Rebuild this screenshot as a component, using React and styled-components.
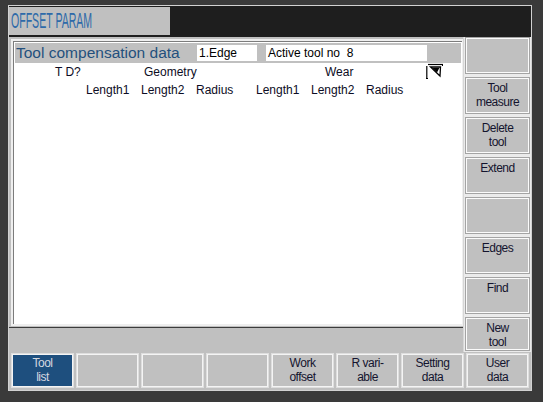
import React from "react";
import styled, { createGlobalStyle } from "styled-components";

const Global = createGlobalStyle`
  html, body { margin: 0; padding: 0; background: #3a3a3a; }
  body { font-family: "Liberation Sans", Arial, sans-serif; }
  #root { width: 543px; height: 402px; overflow: hidden; }
`;

const Frame = styled.div`
  box-sizing: border-box;
  margin: 5px 0 0 8px;
  width: 524px;
  height: 386px;
  border: 1px solid #d2d2d2;
  background: #c0c0c0;
  display: flex;
  flex-direction: column;
`;

const TitleBar = styled.div`
  height: 31px;
  background: #1e1e1e;
  display: flex;
  align-items: flex-start;
  flex-shrink: 0;
`;

const TitleBox = styled.div`
  width: 161px;
  height: 28px;
  margin-top: 1px;
  background: #c0c0c0;
  overflow: hidden;
  display: flex;
  align-items: center;
`;

const TitleText = styled.span`
  display: inline-block;
  font-size: 22px;
  color: #2e6aa9;
  white-space: nowrap;
  transform: scaleX(0.48);
  transform-origin: left center;
  margin-left: 2px;
  line-height: 1;
`;

const Main = styled.div`
  display: grid;
  grid-template-columns: 455px 67px;
  grid-template-rows: 315px;
  height: 315px;
`;

const LeftCol = styled.div`
  display: flex;
  flex-direction: column;
`;

const Panel = styled.div`
  box-sizing: border-box;
  margin: 2px 0 0 2px;
  width: 453px;
  height: 287px;
  border: 2px solid #efefef;
  background: #fff;
  display: flex;
  flex-direction: column;
`;

const PanelInner = styled.div`
  flex: 1;
  border-top: 1px solid #7c7c7c;
  border-left: 1px solid #7c7c7c;
  background: #fff;
  padding: 1px;
  display: flex;
  flex-direction: column;
`;

const HeaderBand = styled.div`
  height: 20px;
  background: #c0c0c0;
  display: flex;
  align-items: center;
  flex-shrink: 0;
`;

const BandTitle = styled.div`
  width: 181px;
  padding-left: 1px;
  font-size: 15.5px;
  color: #24507d;
  white-space: nowrap;
  line-height: 20px;
`;

const Field = styled.div`
  box-sizing: border-box;
  width: ${(p) => p.$w}px;
  margin-right: ${(p) => p.$mr || 0}px;
  height: 16px;
  background: #fff;
  font-size: 12px;
  color: #000;
  padding-left: 2px;
  line-height: 16px;
  white-space: pre;
`;

const HeadRow = styled.div`
  display: grid;
  grid-template-columns: ${(p) => p.$cols};
  height: ${(p) => p.$h}px;
  align-items: center;
  font-size: 12px;
  color: #0c0c24;
  white-space: nowrap;
`;

const Cell = styled.div`
  line-height: 14px;
`;

const StatusBar = styled.div`
  margin-top: 1px;
  border-top: 1px solid #3c3c3c;
  flex: 1;
  background: #c0c0c0;
`;

const SideCol = styled.div`
  display: grid;
  grid-template-rows: repeat(7, 40px) 35px;
  background: #ebebeb;
  border-left: 1px solid #d6d6d6;
  margin-left: -1px;
`;

const SideCell = styled.div`
  padding: ${(p) => (p.$last ? "1px 2px 2px 2px" : "1px 2px 4px 2px")};
  display: flex;
`;

const Key = styled.div`
  flex: 1;
  box-sizing: border-box;
  background: ${(p) => (p.$active ? "#1e4f7e" : "#c0c0c0")};
  color: ${(p) => (p.$active ? "#d4d8e0" : "#14142e")};
  border: 1px solid #fbfbfb;
  box-shadow: 0 0 0 1px ${(p) => (p.$active ? "#e8e8e8" : "#a4a4a4")};
  font-size: 12px;
  letter-spacing: -0.5px;
  line-height: 14px;
  text-align: center;
  display: flex;
  flex-direction: column;
  align-items: center;
  justify-content: flex-start;
  padding-top: 2px;
  white-space: nowrap;
`;

const BottomRow = styled.div`
  display: grid;
  grid-template-columns: repeat(8, 65px);
  height: 37px;
  padding-left: 1px;
`;

const BottomCell = styled.div`
  padding: 2px;
  display: flex;
`;

const BottomKey = styled(Key)`
  border: 1px solid #f4f4f4;
  box-shadow: 0 0 0 1px #dedede;
  padding-top: 1px;
`;

function CursorIcon() {
  return (
    <svg width="18" height="17" viewBox="0 0 18 17" style={{ display: "block" }}>
      <path d="M2 1.5 H17" stroke="#000" strokeWidth="1.2" />
      <path d="M16.5 1 V3" stroke="#000" strokeWidth="1" />
      <path d="M0.8 3 V15.5" stroke="#000" strokeWidth="1.2" />
      <path d="M0 15.5 H2" stroke="#000" strokeWidth="1" />
      <path d="M4.5 4 L14.5 4 L14 13 Z" fill="#fff" stroke="#000" strokeWidth="1.3" strokeLinejoin="miter" />
      <path d="M6 4.8 L13.5 4.8 L11 9.5 Z" fill="#000" />
    </svg>
  );
}

const sideKeys = [
  [],
  ["Tool", "measure"],
  ["Delete", "tool"],
  ["Extend"],
  [],
  ["Edges"],
  ["Find"],
  ["New", "tool"],
];

const bottomKeys = [
  ["Tool", "list"],
  [],
  [],
  [],
  ["Work", "offset"],
  ["R vari-", "able"],
  ["Setting", "data"],
  ["User", "data"],
];

export default function App() {
  return (
    <>
      <Global />
      <Frame>
        <TitleBar>
          <TitleBox>
            <TitleText>OFFSET PARAM</TitleText>
          </TitleBox>
        </TitleBar>
        <Main>
          <LeftCol>
            <Panel>
              <PanelInner>
                <HeaderBand>
                  <BandTitle>Tool compensation data</BandTitle>
                  <Field $w={60} $mr={9}>1.Edge</Field>
                  <Field $w={161}>Active tool no  8</Field>
                </HeaderBand>
                <HeadRow $h={17} $cols="40px 89px 181px 101px 20px">
                  <span />
                  <Cell>T D?</Cell>
                  <Cell>Geometry</Cell>
                  <Cell>Wear</Cell>
                  <CursorIcon />
                </HeadRow>
                <HeadRow $h={19} $cols="71px 55px 55px 60px 55px 55px 55px">
                  <span />
                  <Cell>Length1</Cell>
                  <Cell>Length2</Cell>
                  <Cell>Radius</Cell>
                  <Cell>Length1</Cell>
                  <Cell>Length2</Cell>
                  <Cell>Radius</Cell>
                </HeadRow>
              </PanelInner>
            </Panel>
            <StatusBar />
          </LeftCol>
          <SideCol>
            {sideKeys.map((k, i) => (
              <SideCell key={i} $last={i === sideKeys.length - 1}>
                <Key>
                  {k.map((t) => (
                    <span key={t}>{t}</span>
                  ))}
                </Key>
              </SideCell>
            ))}
          </SideCol>
        </Main>
        <BottomRow>
          {bottomKeys.map((k, i) => (
            <BottomCell key={i}>
              <BottomKey $active={i === 0}>
                {k.map((t) => (
                  <span key={t}>{t}</span>
                ))}
              </BottomKey>
            </BottomCell>
          ))}
        </BottomRow>
      </Frame>
    </>
  );
}
